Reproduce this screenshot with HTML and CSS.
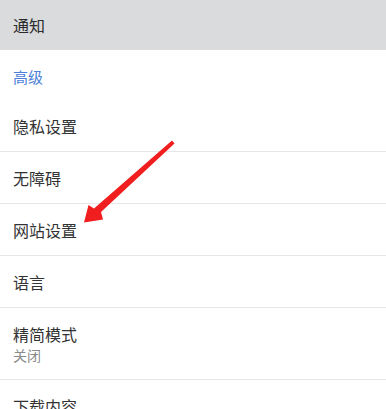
FILE: index.html
```html
<!DOCTYPE html>
<html lang="zh-CN">
<head>
<meta charset="utf-8">
<link rel="stylesheet" href="styles.css">
</head>
<body>
<div class="page">
  <div class="topbar">通知</div>
  <div class="section">高级</div>
  <div class="row"><span class="title">隐私设置</span></div>
  <div class="row"><span class="title">无障碍</span></div>
  <div class="row"><span class="title">网站设置</span></div>
  <div class="row"><span class="title">语言</span></div>
  <div class="row tall"><span class="title">精简模式</span><span class="sub">关闭</span></div>
  <div class="row"><span class="title">下载内容</span></div>
  <svg class="arrow" width="386" height="409" viewBox="0 0 386 409">
    <path d="M172 140.5 L174.5 143.5 L101 212 L103 219.5 L84 222.5 L88.5 205 L94 208.5 Z" fill="#f01e1e"/>
  </svg>
</div>
</body>
</html>
```
FILE: styles.css
```css
html, body {
  margin: 0;
  padding: 0;
  background: #ffffff;
}
body {
  font-family: "Noto Sans CJK SC", "Noto Sans", sans-serif;
  color: #333333;
}
.page {
  position: relative;
  width: 386px;
  height: 409px;
  overflow: hidden;
}
.topbar {
  height: 50px;
  background: #dadbdd;
  display: flex;
  align-items: center;
  padding-left: 13px;
  font-size: 16px;
  color: #2b2b2b;
}
.section {
  height: 50px;
  display: flex;
  align-items: center;
  padding-left: 13px;
  padding-top: 2px;
  box-sizing: border-box;
  font-size: 15px;
  color: #4a80d9;
}
.row {
  height: 52px;
  box-sizing: border-box;
  border-bottom: 1px solid #e6e6e6;
  display: flex;
  flex-direction: column;
  justify-content: center;
  padding-left: 13px;
}
.row.tall {
  height: 72px;
  gap: 1px;
}
.title {
  font-size: 16px;
  line-height: 22px;
  color: #333333;
}
.sub {
  font-size: 14px;
  line-height: 19px;
  color: #8a8a8a;
}
.arrow {
  position: absolute;
  left: 0;
  top: 0;
}
```
